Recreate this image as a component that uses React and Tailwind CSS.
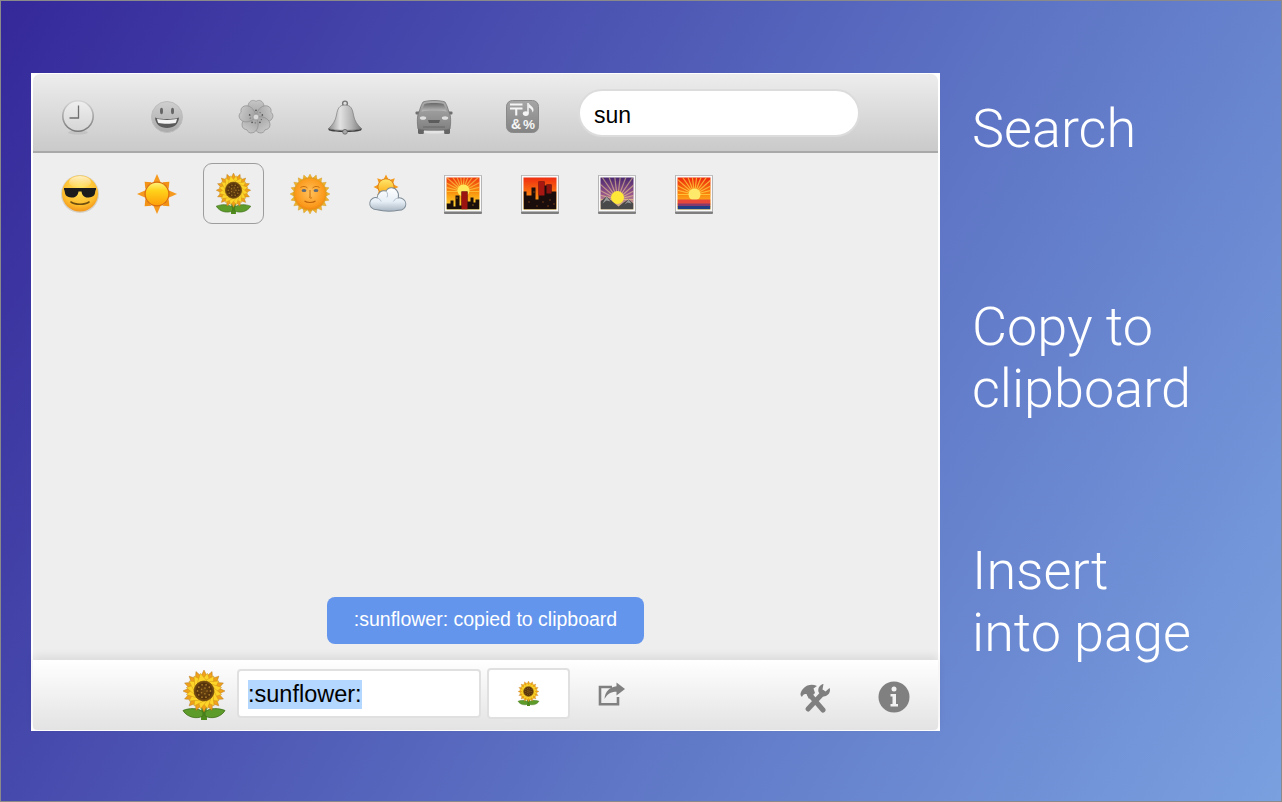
import React from "react";

const range = (n) => Array.from({ length: n }, (_, i) => i);

function Clock() {
  return (
    <svg width="36" height="38" viewBox="0 0 36 38">
      <defs>
        <linearGradient id="clockRim" x1="0" y1="0" x2="0" y2="1"><stop offset="0" stopColor="#d8d8d8" /><stop offset="1" stopColor="#767676" /></linearGradient>
        <linearGradient id="clockFace" x1="0" y1="0" x2="0" y2="1"><stop offset="0" stopColor="#eeeeee" /><stop offset="1" stopColor="#d6d6d6" /></linearGradient>
      </defs>
      <ellipse cx="18" cy="34.5" rx="10" ry="2" fill="#000" opacity="0.07" />
      <circle cx="18" cy="18" r="16" fill="url(#clockRim)" />
      <circle cx="18" cy="18" r="14.4" fill="url(#clockFace)" />
      <path d="M18.5 7.5V20H9.5" fill="none" stroke="#6e6e6e" strokeWidth="1.3" />
    </svg>
  );
}

function Smile() {
  return (
    <svg width="36" height="36" viewBox="0 0 36 36">
      <defs>
        <linearGradient id="smileFace" x1="0" y1="0" x2="0" y2="1"><stop offset="0" stopColor="#cfcfcf" /><stop offset="1" stopColor="#aaaaaa" /></linearGradient>
      </defs>
      <circle cx="18" cy="18" r="15.5" fill="url(#smileFace)" stroke="#bdbdbd" strokeWidth="1" />
      <ellipse cx="12.5" cy="12" rx="1.5" ry="3.2" fill="#666" />
      <ellipse cx="23.5" cy="12" rx="1.5" ry="3.2" fill="#666" />
      <path d="M6 18.5C10 20.5 26 20.5 30 18.5C29.5 25.5 24.5 29 18 29C11.5 29 6.5 25.5 6 18.5Z" fill="#5a5a5a" />
      <path d="M8 19.8C12 21.3 24 21.3 28 19.8C27.6 21.8 27.2 23 26.6 24C22 25 14 25 9.4 24C8.8 23 8.4 21.8 8 19.8Z" fill="#f4f4f4" />
    </svg>
  );
}

function Blossom() {
  return (
    <svg width="36" height="36" viewBox="0 0 38 38">
      <defs>
        <linearGradient id="petal" x1="0" y1="0" x2="0" y2="1"><stop offset="0" stopColor="#c6c6c6" /><stop offset="1" stopColor="#a0a0a0" /></linearGradient>
      </defs>
      {range(5).map((i) => (
        <g key={i} transform={`rotate(${i * 72} 19 19)`}>
          <path d="M19 19C10 15 9 7 12 3.5C14 1 17 1 19 2.5C21 1 24 1 26 3.5C29 7 28 15 19 19Z" fill="url(#petal)" stroke="#8f8f8f" strokeWidth="0.7" />
          <circle cx="19" cy="12" r="0.9" fill="#505050" />
          <circle cx="16" cy="13.5" r="0.6" fill="#5f5f5f" />
        </g>
      ))}
      <circle cx="19" cy="19" r="3" fill="#dadada" stroke="#8a8a8a" strokeWidth="0.5" />
    </svg>
  );
}

function Bell() {
  return (
    <svg width="36" height="36" viewBox="0 0 36 36">
      <defs>
        <linearGradient id="bellBody" x1="0" y1="0" x2="1" y2="0"><stop offset="0" stopColor="#8b8b8b" /><stop offset="0.35" stopColor="#e2e2e2" /><stop offset="0.7" stopColor="#b4b4b4" /><stop offset="1" stopColor="#7a7a7a" /></linearGradient>
      </defs>
      <circle cx="18" cy="4.5" r="2.4" fill="none" stroke="#777" strokeWidth="1.4" />
      <path d="M18 6C12 6 10.5 10 9.5 16C8.5 22 5.5 26 1.5 29.5C8 32 28 32 34.5 29.5C30.5 26 27.5 22 26.5 16C25.5 10 24 6 18 6Z" fill="url(#bellBody)" stroke="#707070" strokeWidth="0.6" />
      <path d="M1 29.5C8 32.5 28 32.5 35 29.5L34 31.5C28 33.5 8 33.5 2 31.5Z" fill="#3f3f3f" />
      <circle cx="18" cy="32.8" r="2.4" fill="#a8a8a8" stroke="#555" strokeWidth="0.7" />
    </svg>
  );
}

function Car() {
  return (
    <svg width="38" height="36" viewBox="0 0 38 36">
      <defs>
        <linearGradient id="carBody" x1="0" y1="0" x2="0" y2="1"><stop offset="0" stopColor="#adadad" /><stop offset="1" stopColor="#7f7f7f" /></linearGradient>
        <linearGradient id="carGlass" x1="0" y1="0" x2="0" y2="1"><stop offset="0" stopColor="#686868" /><stop offset="1" stopColor="#bdbdbd" /></linearGradient>
      </defs>
      <rect x="3" y="26" width="6" height="9" rx="1.5" fill="#656565" />
      <rect x="29" y="26" width="6" height="9" rx="1.5" fill="#656565" />
      <rect x="0.5" y="12.5" width="5" height="3" rx="1" fill="#707070" />
      <rect x="32.5" y="12.5" width="5" height="3" rx="1" fill="#707070" />
      <path d="M8 3C13 1 25 1 30 3C32 6 33 10 34 13C36 16 36 24 35 30C26 32 12 32 3 30C2 24 2 16 4 13C5 10 6 6 8 3Z" fill="url(#carBody)" stroke="#6d6d6d" strokeWidth="0.7" />
      <path d="M9.5 5C14 3.6 24 3.6 28.5 5C30 8 31 10 31.5 12.5C24 11.2 14 11.2 6.5 12.5C7 10 8 8 9.5 5Z" fill="url(#carGlass)" />
      <ellipse cx="8" cy="19" rx="3.2" ry="1.8" fill="#dedede" />
      <ellipse cx="30" cy="19" rx="3.2" ry="1.8" fill="#dedede" />
      <path d="M13 21H25L24 24H14Z" fill="#5c5c5c" />
      <path d="M8 28H30" stroke="#666" strokeWidth="1" />
      <ellipse cx="19" cy="33" rx="11" ry="1.6" fill="#fff" opacity="0.4" />
    </svg>
  );
}

function Symbols() {
  return (
    <svg width="33" height="33" viewBox="0 0 33 33">
      <defs>
        <linearGradient id="symBg" x1="0" y1="0" x2="0" y2="1"><stop offset="0" stopColor="#a6a6a6" /><stop offset="1" stopColor="#838383" /></linearGradient>
      </defs>
      <rect x="0.5" y="0.5" width="32" height="32" rx="6" fill="url(#symBg)" stroke="#8a8a8a" />
      <path d="M4 3.5H16.5V5.5H4ZM4 7.5H16.5V9.5H4ZM9.2 9.5H11.3V15.5H9.2Z" fill="#f5f5f5" />
      <path d="M22 3V13" stroke="#f5f5f5" strokeWidth="1.5" />
      <ellipse cx="19.8" cy="13.6" rx="3" ry="2.3" fill="#f5f5f5" />
      <path d="M22.5 3C24 6 27.5 6.5 27.5 10C27.5 11 27 12 26.5 12.5C26.5 10 25 8.5 22.5 7.5Z" fill="#f5f5f5" />
      <text x="5" y="29" fontSize="14" fontWeight="700" fill="#f5f5f5" fontFamily="'Liberation Sans', sans-serif">&amp;</text>
      <text x="17" y="29" fontSize="13.5" fontWeight="700" fill="#f5f5f5" fontFamily="'Liberation Sans', sans-serif">%</text>
    </svg>
  );
}

function Sunglasses() {
  return (
    <svg width="42" height="42" viewBox="0 0 42 42">
      <defs>
        <radialGradient id="sgFace" cx="0.5" cy="0.35" r="0.7"><stop offset="0" stopColor="#ffe45c" /><stop offset="0.7" stopColor="#fdbb2c" /><stop offset="1" stopColor="#ef8a16" /></radialGradient>
        <linearGradient id="sgShine" x1="0" y1="0" x2="0" y2="1"><stop offset="0" stopColor="#fff" stopOpacity="0.7" /><stop offset="1" stopColor="#fff" stopOpacity="0" /></linearGradient>
      </defs>
      <circle cx="21" cy="21" r="19" fill="#8c7a55" opacity="0.25" />
      <circle cx="21" cy="20.5" r="18" fill="url(#sgFace)" />
      <ellipse cx="21" cy="9" rx="11" ry="6" fill="url(#sgShine)" />
      <path d="M5 15H37V16.5C36.5 17 36.3 18 36 20C35.5 23.5 32 24.5 28.5 24.5C25 24.5 23 22 22.5 18.5H19.5C19 22 17 24.5 13.5 24.5C10 24.5 6.5 23.5 6 20C5.7 18 5.5 17 5 16.5Z" fill="#1c1c1c" />
      <path d="M12 29C16 32 26 32 30 29" fill="none" stroke="#6f4f10" strokeWidth="1.6" strokeLinecap="round" />
    </svg>
  );
}

function Sun() {
  return (
    <svg width="42" height="42" viewBox="0 0 42 42">
      <defs>
        <linearGradient id="sunDisc" x1="0" y1="0" x2="0" y2="1"><stop offset="0" stopColor="#fff27a" /><stop offset="0.35" stopColor="#ffd21a" /><stop offset="1" stopColor="#ff9f0a" /></linearGradient>
      </defs>
      {range(4).map((i) => (
        <path key={i} transform={`rotate(${i * 90} 21 21)`} d="M17.5 9L21 1L24.5 9Z" fill="#f59a1f" />
      ))}
      {range(4).map((i) => (
        <path key={i} transform={`rotate(${45 + i * 90} 21 21)`} d="M16.5 9L21 3.5L25.5 9Z" fill="#f29316" />
      ))}
      <circle cx="21" cy="21" r="12.5" fill="#d96a0c" />
      <circle cx="21" cy="21" r="11.3" fill="url(#sunDisc)" />
    </svg>
  );
}

function Sunflower({ id, size }) {
  return (
    <svg width={size} height={size} viewBox="0 0 50 50">
      <defs>
        <radialGradient id={`sf${id}`} cx="0.5" cy="0.5" r="0.5"><stop offset="0" stopColor="#6a4512" /><stop offset="0.75" stopColor="#51300c" /><stop offset="1" stopColor="#8a5a12" /></radialGradient>
      </defs>
      <path d="M22.5 30H27.5L28 50H22Z" fill="#4f8a1d" />
      <path d="M24 42C19 37.5 10 38 4 40.5C8 47.5 18 49.5 24 46Z" fill="#5d9b2a" stroke="#3f6f18" strokeWidth="0.8" />
      <path d="M26 42C31 37.5 40 38 46 40.5C42 47.5 32 49.5 26 46Z" fill="#5d9b2a" stroke="#3f6f18" strokeWidth="0.8" />
      {range(16).map((i) => (
        <path key={i} transform={`rotate(${i * 22.5} 25 21)`} d="M20.5 9L25 0L29.5 9Z" fill="#f0a11a" stroke="#a96a0c" strokeWidth="0.4" />
      ))}
      {range(16).map((i) => (
        <path key={i} transform={`rotate(${11 + i * 22.5} 25 21)`} d="M20 12L25 3L30 12Z" fill="#fdd52a" stroke="#c78c10" strokeWidth="0.4" />
      ))}
      <circle cx="25" cy="21" r="10" fill={`url(#sf${id})`} stroke="#3f2507" strokeWidth="0.5" />
      {range(10).map((i) => (
        <circle key={i} cx={25 + 6.5 * Math.cos(i * 0.63)} cy={21 + 6.5 * Math.sin(i * 0.63)} r="0.9" fill="#a87a28" />
      ))}
      {range(5).map((i) => (
        <circle key={i} cx={25 + 3 * Math.cos(i * 1.26)} cy={21 + 3 * Math.sin(i * 1.26)} r="0.8" fill="#a87a28" />
      ))}
    </svg>
  );
}

function SunFace() {
  return (
    <svg width="42" height="42" viewBox="0 0 42 42">
      <defs>
        <radialGradient id="sfFace" cx="0.5" cy="0.45" r="0.55"><stop offset="0" stopColor="#ffc05a" /><stop offset="0.8" stopColor="#fb9a1c" /><stop offset="1" stopColor="#ee8210" /></radialGradient>
      </defs>
      {range(20).map((i) => (
        <path key={i} transform={`rotate(${i * 18} 21 21)`} d="M18.8 5L21 1L23.2 5Z" fill="#eeb32a" stroke="#c98a14" strokeWidth="0.3" />
      ))}
      <circle cx="21" cy="21" r="16.2" fill="url(#sfFace)" stroke="#e0a020" strokeWidth="1" />
      <ellipse cx="15" cy="17.5" rx="2.4" ry="1.5" fill="#5f6b78" />
      <ellipse cx="27" cy="17.5" rx="2.4" ry="1.5" fill="#5f6b78" />
      <path d="M11.5 14.5C13.5 13 16.5 13 18.5 15M23.5 15C25.5 13 28.5 13 30.5 14.5" fill="none" stroke="#c66c0a" strokeWidth="0.9" />
      <path d="M21 17V24C19.5 25 22.5 25.5 23 24.5" fill="none" stroke="#c66c0a" strokeWidth="1" />
      <path d="M15.5 28C18 30 24 30 26.5 28" fill="none" stroke="#c0640a" strokeWidth="1.2" />
    </svg>
  );
}

function SunCloud() {
  return (
    <svg width="42" height="42" viewBox="0 0 42 42">
      <defs>
        <linearGradient id="scCloud" x1="0" y1="0" x2="0" y2="1"><stop offset="0" stopColor="#fff" /><stop offset="0.6" stopColor="#e6eef6" /><stop offset="1" stopColor="#a9b6c2" /></linearGradient>
        <linearGradient id="scSun" x1="0" y1="0" x2="0" y2="1"><stop offset="0" stopColor="#ffe66a" /><stop offset="1" stopColor="#fca812" /></linearGradient>
      </defs>
      {range(8).map((i) => (
        <path key={i} transform={`rotate(${i * 45} 20 14)`} d="M17.5 6.5L20 1.5L22.5 6.5Z" fill="#f49a1c" />
      ))}
      <circle cx="20" cy="14" r="8.5" fill="#d8740d" />
      <circle cx="20" cy="14" r="7.7" fill="url(#scSun)" />
      <g transform="matrix(0.9 0 0 1.04 3 -2.7)">
        <path d="M9 38C3 38 0 34.5 1 30.5C2 27 6 25.5 9 26.5C9.5 21.5 14 18.5 19 20C21 16 28 15.5 31 19.5C33.5 22.5 33 25 32.5 26.5C37 26 41 29 41 32.5C41 36 37.5 38.5 33 38.5C26 39.5 16 39.5 9 38Z" fill="url(#scCloud)" stroke="#7d8a95" strokeWidth="1" />
        <path d="M19 20C21 22 21 24 20 26M32.5 26.5C30 27 28 28.5 27 30M9 26.5C11 27 13 28.5 13.5 30" fill="none" stroke="#a9b6c4" strokeWidth="0.9" />
      </g>
    </svg>
  );
}

function Scene({ id, children, from, via, to }) {
  return (
    <svg className="mt-[2px]" width="38" height="40" viewBox="0 0 38 40">
      <defs>
        <linearGradient id={`sky${id}`} x1="0" y1="0" x2="0" y2="1"><stop offset="0" stopColor={from} /><stop offset="0.55" stopColor={via} /><stop offset="1" stopColor={to} /></linearGradient>
      </defs>
      <rect x="0" y="1" width="38" height="38" fill="#7e7e7e" rx="1" />
      <rect x="0.5" y="0.5" width="37" height="36" fill="#fafafa" stroke="#b4b4b4" strokeWidth="0.8" />
      <rect x="2.5" y="2.5" width="33" height="32" fill={`url(#sky${id})`} />
      <svg x="2.5" y="2.5" width="33" height="32" viewBox="0 0 33 32">{children}</svg>
    </svg>
  );
}

const rays = (cx, cy, color, opacity = 0.55) =>
  range(14).map((i) => {
    const a = Math.PI + (i * Math.PI) / 13;
    return <line key={i} x1={cx} y1={cy} x2={cx + 40 * Math.cos(a)} y2={cy + 40 * Math.sin(a)} stroke={color} strokeWidth="1.2" opacity={opacity} />;
  });

function Cityscape1() {
  return (
    <Scene id="a" from="#ef3a12" via="#fba012" to="#fde23a">
      {rays(16, 14, "#ffe45a")}
      <circle cx="17" cy="13" r="6" fill="#ffe95a" />
      <path d="M0 32V26H4V23H7V29H9V18H13V28H15V14H21V24H24V20H27V25H29V22H33V32Z" fill="#1b0f0c" />
      <rect x="15" y="14" width="6" height="18" fill="#9c1410" />
      <rect x="10" y="20" width="1" height="1" fill="#e8a01a" />
      <rect x="26" y="27" width="1" height="1" fill="#e8a01a" />
    </Scene>
  );
}

function Cityscape2() {
  return (
    <Scene id="b" from="#ef2d10" via="#fb7d10" to="#fbc428">
      <path d="M0 32V14H3V18H8V10H12V22H15V4H21V8H23V7H28V14H33V32Z" fill="#1a0d0b" />
      <rect x="15" y="4" width="6" height="14" fill="#a81612" />
      <rect x="23" y="7" width="5" height="9" fill="#8c1410" />
      {[[10, 14], [5, 24], [19, 24], [26, 22], [30, 26], [13, 28], [24, 28]].map(([x, y]) => (
        <rect key={`${x}-${y}`} x={x} y={y} width="1" height="1" fill="#c66a18" />
      ))}
    </Scene>
  );
}

function Mountains() {
  return (
    <Scene id="c" from="#4b2970" via="#9a5a8c" to="#efd28a">
      {rays(17, 22, "#f3d890", 0.55)}
      <circle cx="17" cy="20" r="6.5" fill="#ffe838" />
      <path d="M0 32V24L6 19L13 25L18 29L23 25L28 22L33 26V32Z" fill="#4a4a4a" />
      <path d="M6 19L10 24L6 23L2 26ZM28 22L31 26L27 25L24 27Z" fill="#9a9a9a" />
    </Scene>
  );
}

function Sunrise() {
  return (
    <Scene id="d" from="#ee2a10" via="#fb8c12" to="#ffd02a">
      {rays(17, 17, "#ffd84a", 0.7)}
      <circle cx="17" cy="17" r="6" fill="#ffe96a" />
      <rect x="0" y="22" width="33" height="5" fill="#e8483a" />
      <rect x="0" y="26" width="33" height="3" fill="#8a3a6a" />
      <rect x="0" y="28.5" width="33" height="3.5" fill="#1f3f84" />
    </Scene>
  );
}

function ShareIcon() {
  return (
    <svg width="28" height="24" viewBox="0 0 28 24">
      <path d="M14 5H2V22.2H20V15" fill="none" stroke="#808080" strokeWidth="2.6" />
      <path d="M18.5 0.5L27 7L18.5 13.5V9.8C14 9.8 10 11 6.5 17C7 9.5 12 4.8 18.5 4.3Z" fill="#808080" />
    </svg>
  );
}

function ToolsIcon() {
  return (
    <svg width="32" height="30" viewBox="0 0 32 30">
      <path d="M9 26L24 10" stroke="#808080" strokeWidth="5" strokeLinecap="round" />
      <path d="M24 27L11 12" stroke="#808080" strokeWidth="5" strokeLinecap="round" />
      <path d="M2 9C5 3 11 0 18 3L14.5 5.5L16 10L10 16L7.5 11C5 10.5 3.5 12 3 14C1.5 13 1 11 2 9Z" fill="#808080" />
      <path d="M24.5 1C21 1.5 18.5 5 19.5 9L22.5 13C26.5 14.5 31 11.5 31 7C31 6 30.8 5.5 30.5 5L26.5 8.5L23.5 6.5L24.5 1Z" fill="#808080" />
    </svg>
  );
}

function InfoIcon() {
  return (
    <svg width="32" height="32" viewBox="0 0 32 32">
      <circle cx="16" cy="16" r="15.5" fill="#808080" />
      <circle cx="16" cy="8" r="2.5" fill="#f2f2f2" />
      <path d="M12.5 13H18V23H20V25.5H12.5V23H14.5V15.5H12.5Z" fill="#f2f2f2" />
    </svg>
  );
}

const tabs = [
  { key: "clock", node: <Clock /> },
  { key: "smile", node: <Smile /> },
  { key: "blossom", node: <Blossom /> },
  { key: "bell", node: <Bell /> },
  { key: "car", node: <Car /> },
  { key: "symbols", node: <Symbols /> },
];

const results = [
  { key: "shades", node: <Sunglasses /> },
  { key: "sun", node: <Sun /> },
  { key: "flower", node: <Sunflower id="r" size={41} />, selected: true },
  { key: "face", node: <SunFace /> },
  { key: "cloud", node: <SunCloud /> },
  { key: "city1", node: <Cityscape1 /> },
  { key: "city2", node: <Cityscape2 /> },
  { key: "mountain", node: <Mountains /> },
  { key: "sunrise", node: <Sunrise /> },
];

export default function App() {
  return (
    <div className="w-[1282px] h-[802px] overflow-hidden flex border border-[#8a8a8a] pl-[30px] pt-[72px] bg-[linear-gradient(120deg,#35289a_0%,#4a50b0_32%,#5f77c6_62%,#7aa0e0_100%)] font-['Liberation_Sans',sans-serif]">
      <div className="w-[909px] h-[658px] shrink-0 bg-white px-[2px] py-[1px] flex flex-col">
        <header className="h-[79px] shrink-0 rounded-t-[7px] bg-gradient-to-b from-[#ededed] to-[#cacaca] border-b-2 border-[#a9a9a9] flex items-center">
          <div className="flex">
            {tabs.map((t) => (
              <div key={t.key} className="w-[89px] h-[77px] flex items-center justify-center pt-[8px]">
                {t.node}
              </div>
            ))}
          </div>
          <div className="ml-[11px] w-[282px] h-[48px] rounded-full bg-white border-2 border-[#dcdcdc] flex items-center pl-[14px] pt-[6px] text-[23px] text-black">
            sun
          </div>
        </header>

        <main className="relative flex-1 bg-[#eeeeee] pl-[16.5px] pt-[10px]">
          <div className="flex gap-[15.7px]">
            {results.map((r) => (
              <div
                key={r.key}
                className={
                  r.selected
                    ? "w-[61px] h-[61px] rounded-[9px] border-[1.5px] border-[#9d9d9d] flex items-center justify-center"
                    : "w-[61px] h-[61px] flex items-center justify-center"
                }
              >
                {r.node}
              </div>
            ))}
          </div>
          <div className="absolute left-[294px] bottom-[16px] w-[317px] h-[47px] rounded-[8px] bg-[#6495ed] text-white text-[19.5px] pb-[2px] flex items-center justify-center">
            :sunflower: copied to clipboard
          </div>
        </main>

        <footer className="h-[70px] shrink-0 rounded-b-[4px] bg-gradient-to-b from-white to-[#e3e3e3] shadow-[0_-4px_8px_rgba(0,0,0,0.08)] flex items-start relative">
          <div className="ml-[146px] mt-[10px] w-[50px] flex justify-center">
            <Sunflower id="f" size={50} />
          </div>
          <div className="ml-[8px] mt-[9px] w-[244px] h-[49px] rounded-[4px] bg-white border-2 border-[#e0e0e0] flex items-center pl-[9px] pt-[1px] text-[23.5px] text-black">
            <span className="bg-[#b3d7ff] leading-[29px]">:sunflower:</span>
          </div>
          <div className="ml-[6px] mt-[8px] w-[83px] h-[51px] rounded-[4px] bg-white border-2 border-[#e0e0e0] flex items-center justify-center">
            <Sunflower id="s" size={25} />
          </div>
          <div className="ml-[28px] mt-[22px]">
            <ShareIcon />
          </div>
          <div className="ml-[173px] mt-[23px]">
            <ToolsIcon />
          </div>
          <div className="ml-[47px] mt-[21px]">
            <InfoIcon />
          </div>
        </footer>
      </div>

      <aside className="ml-[32px] pt-[25px] text-white text-[54px] leading-[62px] font-light font-['Roboto',sans-serif]">
        <p>Search</p>
        <p className="mt-[136px]">
          Copy to
          <br />
          clipboard
        </p>
        <p className="mt-[120px]">
          Insert
          <br />
          into page
        </p>
      </aside>
    </div>
  );
}
